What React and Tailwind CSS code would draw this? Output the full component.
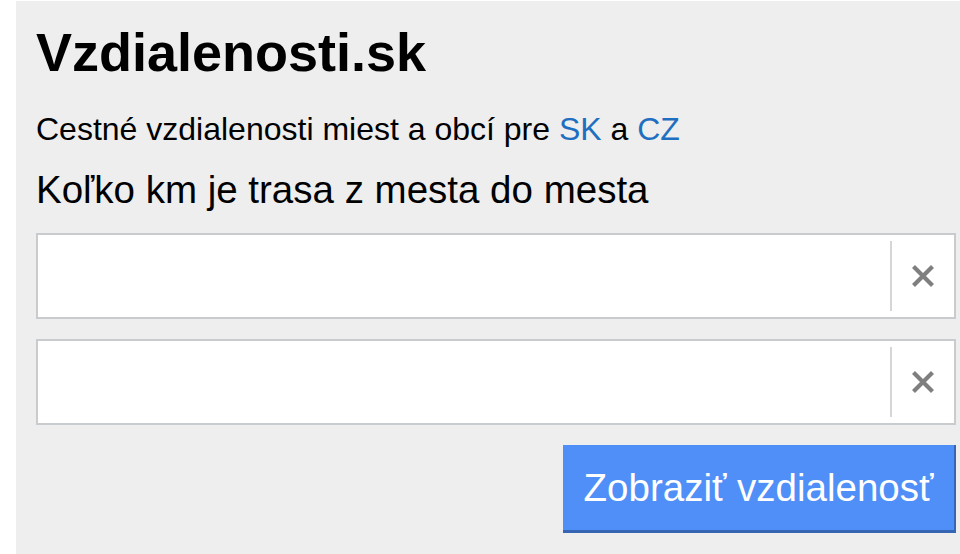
import { useState } from "react";

function ClearIcon() {
  return (
    <svg width="24" height="24" viewBox="0 0 24 24" className="block">
      <path d="M2.5 2.5 L21.5 21.5 M21.5 2.5 L2.5 21.5" stroke="#7f7f7f" strokeWidth="4.2" strokeLinecap="butt" />
    </svg>
  );
}

function CityInput({ value, onChange }) {
  return (
    <div className="flex h-[86px] border-2 border-[#c9cccf] bg-white">
      <input
        value={value}
        onChange={(e) => onChange(e.target.value)}
        className="min-w-0 flex-1 bg-transparent px-4 text-[30px] outline-none"
      />
      <div className="my-[6px] w-[2px] bg-[#d6d6d6]" />
      <button
        onClick={() => onChange("")}
        className="flex w-[62px] items-center justify-center"
      >
        <ClearIcon />
      </button>
    </div>
  );
}

export default function App() {
  const [from, setFrom] = useState("");
  const [to, setTo] = useState("");

  return (
    <div className="h-[554px] overflow-hidden bg-white pl-4 pt-px font-['Liberation_Sans',Arial,sans-serif]">
      <div className="h-full bg-[#eeeeee] pl-5 pr-1 text-black">
        <h1 className="pt-[21px] text-[54px] font-bold leading-[60px]">Vzdialenosti.sk</h1>
        <p className="mt-[29px] text-[32px] leading-[36px]">
          Cestné vzdialenosti miest a obcí pre{" "}
          <a href="#" className="text-[#1f6fc1]">SK</a> a{" "}
          <a href="#" className="text-[#1f6fc1]">CZ</a>
        </p>
        <h2 className="mt-[21px] text-[38.5px] leading-[44px]">Koľko km je trasa z mesta do mesta</h2>
        <div className="mt-[21px] flex flex-col gap-[20px]">
          <CityInput value={from} onChange={setFrom} />
          <CityInput value={to} onChange={setTo} />
        </div>
        <div className="mt-[20px] flex justify-end">
          <button className="h-[88px] w-[393px] border-b-[3px] border-r-[2px] border-[#3565b3] bg-[#4f8ff7] text-[38.5px] text-white">
            Zobraziť vzdialenosť
          </button>
        </div>
      </div>
    </div>
  );
}
